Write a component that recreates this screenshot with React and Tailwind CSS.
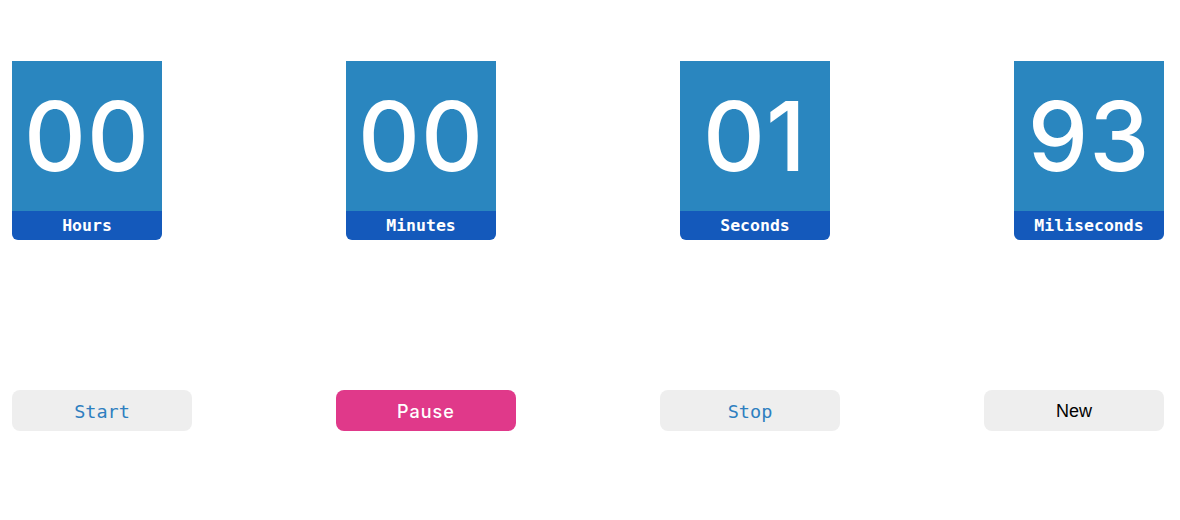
const units = [
  { value: "00", label: "Hours" },
  { value: "00", label: "Minutes" },
  { value: "01", label: "Seconds" },
  { value: "93", label: "Miliseconds" },
];

const mono = { fontFamily: '"DejaVu Sans Mono", "Liberation Mono", monospace' };

const App = () => {
  return (
    <div className="w-[1180px] h-[520px] bg-white pl-3 pr-4 pt-[61px]">
      <div className="flex justify-between">
        {units.map((u) => (
          <div key={u.label} className="w-[150px] flex flex-col rounded-b-md overflow-hidden">
            <div className="h-[150px] bg-[#2a86bf] flex items-center justify-center">
              <span className="text-white text-[96px] leading-none font-medium font-['Inter',sans-serif] tracking-[1px]">
                {u.value}
              </span>
            </div>
            <div
              className="h-[29px] bg-[#1459bb] flex items-center justify-center text-white text-[16.5px] font-bold pt-[2px]"
              style={mono}
            >
              {u.label}
            </div>
          </div>
        ))}
      </div>

      <div className="flex justify-between mt-[150px]">
        <button className="w-[180px] h-[41px] rounded-lg bg-[#eeeeee] text-[#2e7fc0] text-[18.5px] pt-[2px]" style={mono}>
          Start
        </button>
        <button className="w-[180px] h-[41px] rounded-lg bg-[#e0398a] text-white text-[18px] font-medium tracking-[1px] font-['Inter',sans-serif] pt-[2px]">
          Pause
        </button>
        <button className="w-[180px] h-[41px] rounded-lg bg-[#eeeeee] text-[#2e7fc0] text-[18.5px] pt-[2px]" style={mono}>
          Stop
        </button>
        <button className="w-[180px] h-[41px] rounded-lg bg-[#eeeeee] text-black text-[18px] font-['Liberation_Sans',sans-serif] pt-[2px]">
          New
        </button>
      </div>
    </div>
  );
};

export default App;
